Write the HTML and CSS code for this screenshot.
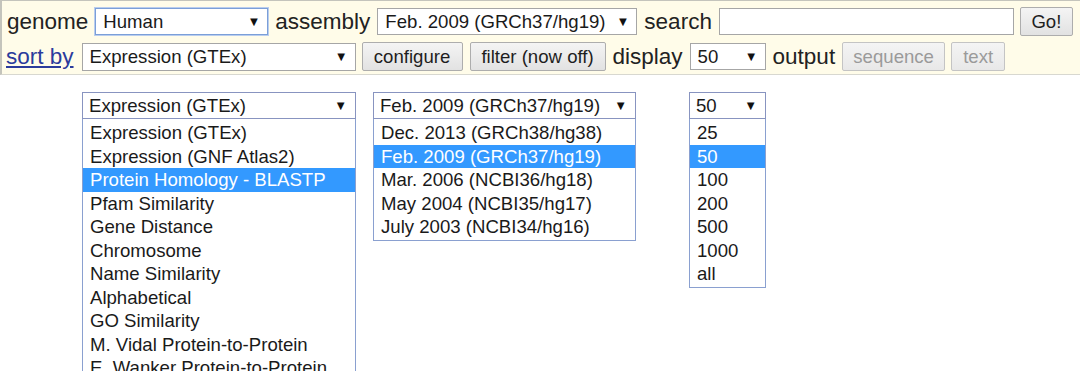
FILE: index.html
```html
<!DOCTYPE html>
<html>
<head>
<meta charset="utf-8">
<link rel="stylesheet" href="styles.css">
</head>
<body>
<div class="toolbar">
  <div class="row">
    <span class="label">genome</span>
    <div class="sel sel-genome focused"><span>Human</span><span class="arrow">▼</span></div>
    <span class="label">assembly</span>
    <div class="sel sel-assembly"><span>Feb. 2009 (GRCh37/hg19)</span><span class="arrow">▼</span></div>
    <span class="label">search</span>
    <div class="input"></div>
    <button class="btn btn-go">Go!</button>
  </div>
  <div class="row">
    <a class="label link" href="#">sort by</a>
    <div class="sel sel-sort"><span>Expression (GTEx)</span><span class="arrow">▼</span></div>
    <button class="btn btn-configure">configure</button>
    <button class="btn btn-filter">filter (now off)</button>
    <span class="label">display</span>
    <div class="sel sel-display"><span>50</span><span class="arrow">▼</span></div>
    <span class="label">output</span>
    <button class="btn btn-seq" disabled>sequence</button>
    <button class="btn btn-text" disabled>text</button>
  </div>
</div>

<div class="menus">
  <div class="dropdown dd-sort">
    <div class="dd-head"><span>Expression (GTEx)</span><span class="arrow">▼</span></div>
    <ul class="dd-list">
      <li>Expression (GTEx)</li>
      <li>Expression (GNF Atlas2)</li>
      <li class="active">Protein Homology - BLASTP</li>
      <li>Pfam Similarity</li>
      <li>Gene Distance</li>
      <li>Chromosome</li>
      <li>Name Similarity</li>
      <li>Alphabetical</li>
      <li>GO Similarity</li>
      <li>M. Vidal Protein-to-Protein</li>
      <li>E. Wanker Protein-to-Protein</li>
    </ul>
  </div>
  <div class="dropdown dd-assembly">
    <div class="dd-head"><span>Feb. 2009 (GRCh37/hg19)</span><span class="arrow">▼</span></div>
    <ul class="dd-list">
      <li>Dec. 2013 (GRCh38/hg38)</li>
      <li class="active">Feb. 2009 (GRCh37/hg19)</li>
      <li>Mar. 2006 (NCBI36/hg18)</li>
      <li>May 2004 (NCBI35/hg17)</li>
      <li>July 2003 (NCBI34/hg16)</li>
    </ul>
  </div>
  <div class="dropdown dd-display">
    <div class="dd-head"><span>50</span><span class="arrow">▼</span></div>
    <ul class="dd-list">
      <li>25</li>
      <li class="active">50</li>
      <li>100</li>
      <li>200</li>
      <li>500</li>
      <li>1000</li>
      <li>all</li>
    </ul>
  </div>
</div>
</body>
</html>
```

FILE: styles.css
```css
html, body {
  margin: 0;
  padding: 0;
  background: #fff;
  font-family: "Liberation Sans", Arial, sans-serif;
  color: #1e1e1e;
  overflow: hidden;
}

.toolbar {
  background: #fffce9;
  border-top: 1px solid #c4c4bc;
  border-left: 2px solid #c4c4bc;
  border-bottom: 1px solid #d8d8d0;
  padding: 6px 4px 3px 5px;
  display: flex;
  flex-direction: column;
  gap: 6px;
}

.row {
  display: flex;
  align-items: center;
  gap: 7px;
  height: 29px;
}

.label {
  font-size: 22.5px;
  line-height: 29px;
  color: #222;
  white-space: nowrap;
}

.link {
  color: #2b3b9c;
  text-decoration: underline;
  margin-left: -1px;
  margin-right: 1px;
}

.sel {
  box-sizing: border-box;
  height: 27px;
  background: #fff;
  border: 1px solid #a6a6a6;
  display: flex;
  align-items: center;
  justify-content: space-between;
  padding: 0 7px 0 7px;
  font-size: 18.6px;
  color: #1a1a1a;
  white-space: nowrap;
}

.sel.focused {
  border: 1px solid #7b9fd8;
  box-shadow: 0 0 0 1px #b9cdee;
}

.sel-sort {
  height: 28px;
}

.arrow {
  font-size: 13px;
  color: #111;
  margin-left: 4px;
}

.sel-genome { width: 173px; }
.sel-assembly { width: 260px; }
.sel-sort { width: 274px; }
.sel-display { width: 76px; }

.input {
  box-sizing: border-box;
  width: 295px;
  height: 27px;
  background: #fff;
  border: 1px solid #a6a6a6;
}

.btn {
  box-sizing: border-box;
  height: 29px;
  font-family: "Liberation Sans", Arial, sans-serif;
  font-size: 18.6px;
  color: #1e1e1e;
  background: linear-gradient(#f4f4f4, #e2e2e2);
  border: 1px solid #adadad;
  border-radius: 2px;
  padding: 0;
  text-align: center;
}

.btn:disabled {
  color: #9a9a9a;
  border-color: #c4c4c4;
  background: linear-gradient(#f4f4f4, #e8e8e8);
}

.btn-go { width: 53px; margin-left: -1px; }
.btn-configure { width: 101px; margin-left: -1px; }
.btn-filter { width: 136px; }
.btn-seq { width: 103px; }
.btn-text { width: 54px; margin-left: -1px; }

.menus {
  display: flex;
  align-items: flex-start;
  padding-left: 82px;
  margin-top: 17px;
}

.dropdown {
  box-sizing: border-box;
  font-size: 18.6px;
  color: #1a1a1a;
}

.dd-sort { width: 274px; }
.dd-assembly { width: 263px; margin-left: 17px; }
.dd-display { width: 77px; margin-left: 53px; }

.dd-head {
  box-sizing: border-box;
  height: 27px;
  border: 1px solid #8894c0;
  background: #fff;
  display: flex;
  align-items: center;
  justify-content: space-between;
  padding: 0 8px 0 6px;
  white-space: nowrap;
}

.dd-list {
  list-style: none;
  margin: 0;
  padding: 2px 0 1px 0;
  border: 1px solid #8aa0d0;
  border-top: none;
  background: #fff;
}

.dd-list li {
  height: 23.5px;
  line-height: 23.5px;
  padding-left: 7px;
  white-space: nowrap;
}

.dd-list li.active {
  background: #3399ff;
  color: #fff;
}
```
